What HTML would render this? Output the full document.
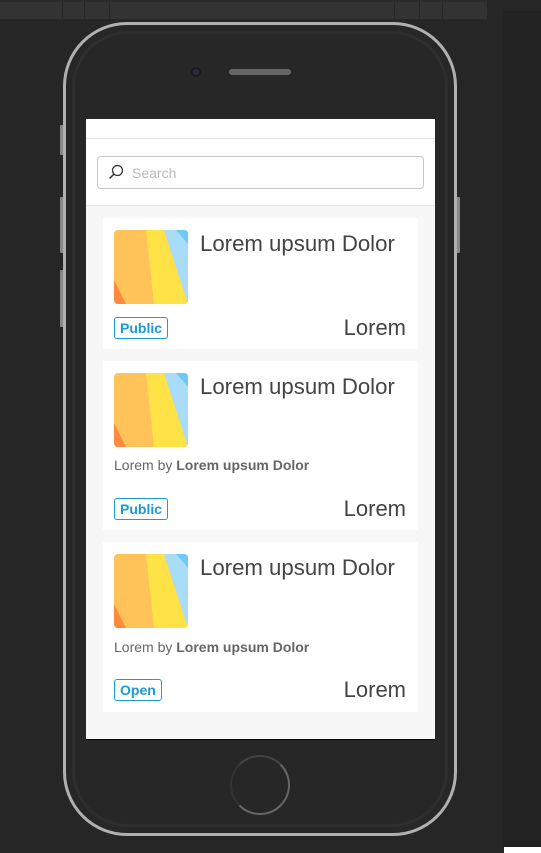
<!DOCTYPE html><html><head><style>
*{margin:0;padding:0;box-sizing:border-box}
body{width:541px;height:853px;background:#262626;position:relative;overflow:hidden;font-family:"Liberation Sans",sans-serif}
.top{position:absolute;left:0;top:0;width:487px;height:19px;background:#333;border-top:2px solid #2a2a2a}
.top i{position:absolute;top:0;width:1px;height:19px;background:#262626}
.rs{position:absolute;left:503px;top:11px;width:38px;height:836px;background:#222}
.wc{position:absolute;left:504px;top:847px;width:37px;height:6px;background:#fff}
.phone{position:absolute;left:63px;top:22px;width:394px;height:814px;border:3px solid #b0b0b0;border-radius:64px;background:#272727}
.inner{position:absolute;left:6px;top:6px;right:6px;bottom:6px;border-radius:56px;border:3px solid #2e2e2e}
.btn{position:absolute;width:4px;background:#888;border-radius:1px}
.screen{position:absolute;left:86px;top:119px;width:349px;height:621px;background:#f7f7f7;border-bottom:1px solid #000}
.hdr{position:absolute;left:0;top:0;width:349px;height:87px;background:#fff;border-bottom:1px solid #e4e4e4}
.hdr .l{position:absolute;left:0;top:19px;width:349px;height:1px;background:#e4e4e4}
.search{position:absolute;left:11px;top:37px;width:327px;height:33px;border:1px solid #c8c8c8;border-radius:4px;color:#bbb;font-size:14px;padding:8px 0 0 34px}
.card{position:absolute;left:17px;width:315px;background:#fff}
.img{position:absolute;left:11px;top:12px;width:74px;height:74px;border-radius:4px;overflow:hidden}
.t{position:absolute;left:97px;top:13px;font-size:22.2px;color:#444}
.tag{position:absolute;left:11px;height:22px;border:1px solid #1a9ad6;border-radius:3px;color:#1a9ad6;font-weight:bold;font-size:14px;padding:2px 5px}
.r{position:absolute;right:12px;font-size:22px;color:#444}
.by{position:absolute;left:11px;font-size:14px;color:#666}
.by b{color:#666}
</style></head><body>
<div class="top"><i style="left:62px"></i><i style="left:84px"></i><i style="left:109px"></i><i style="left:394px"></i><i style="left:419px"></i><i style="left:442px"></i></div>
<div class="rs"></div><div class="wc"></div>
<div class="btn" style="left:60px;top:125px;height:30px"></div>
<div class="btn" style="left:60px;top:197px;height:56px"></div>
<div class="btn" style="left:60px;top:270px;height:57px"></div>
<div class="btn" style="left:456px;top:197px;height:56px"></div>
<div class="phone"><div class="inner"></div></div>
<div style="position:absolute;left:191px;top:67px;width:10px;height:10px;border-radius:50%;background:#2f2b40;border:2px solid #1a1a1a"></div>
<div style="position:absolute;left:229px;top:69px;width:62px;height:6px;border-radius:3px;background:#666"></div>
<div style="position:absolute;left:230px;top:755px;width:60px;height:60px;border-radius:50%;border:2px solid #666;border-left-color:#333;border-top-color:#444"></div>
<div class="screen">
<div class="hdr"><div class="l"></div><div class="search">Search</div>
<svg style="position:absolute;left:22px;top:45px" width="16" height="16" viewBox="0 0 16 16"><circle cx="9.5" cy="6.5" r="5" fill="none" stroke="#333" stroke-width="1.3"/><line x1="6" y1="10" x2="1.5" y2="14.5" stroke="#333" stroke-width="1.5"/></svg></div>
</div>
<svg width="0" height="0" style="position:absolute"><defs><symbol id="im" viewBox="0 0 74 74"><rect width="74" height="74" fill="#ffc35a"/><polygon points="32,0 50,0 74,74 40,74" fill="#ffe245"/><polygon points="50,0 74,0 74,74" fill="#a8dcf8"/><polygon points="62,0 74,0 74,14" fill="#6ec9f7"/><polygon points="0,50 12,74 0,74" fill="#ff8a3d"/></symbol></defs></svg>
<div class="card" style="left:103px;top:218px;height:131px"><div class="img"><svg width="74" height="74"><use href="#im"/></svg></div><div class="t">Lorem upsum Dolor</div><div class="tag" style="top:99px">Public</div><div class="r" style="top:97px">Lorem</div></div>
<div class="card" style="left:103px;top:361px;height:169px"><div class="img"><svg width="74" height="74"><use href="#im"/></svg></div><div class="t">Lorem upsum Dolor</div><div class="by" style="top:96px">Lorem by <b>Lorem upsum Dolor</b></div><div class="tag" style="top:137px">Public</div><div class="r" style="top:135px">Lorem</div></div>
<div class="card" style="left:103px;top:542px;height:170px"><div class="img"><svg width="74" height="74"><use href="#im"/></svg></div><div class="t">Lorem upsum Dolor</div><div class="by" style="top:97px">Lorem by <b>Lorem upsum Dolor</b></div><div class="tag" style="top:137px">Open</div><div class="r" style="top:135px">Lorem</div></div>
</body></html>
